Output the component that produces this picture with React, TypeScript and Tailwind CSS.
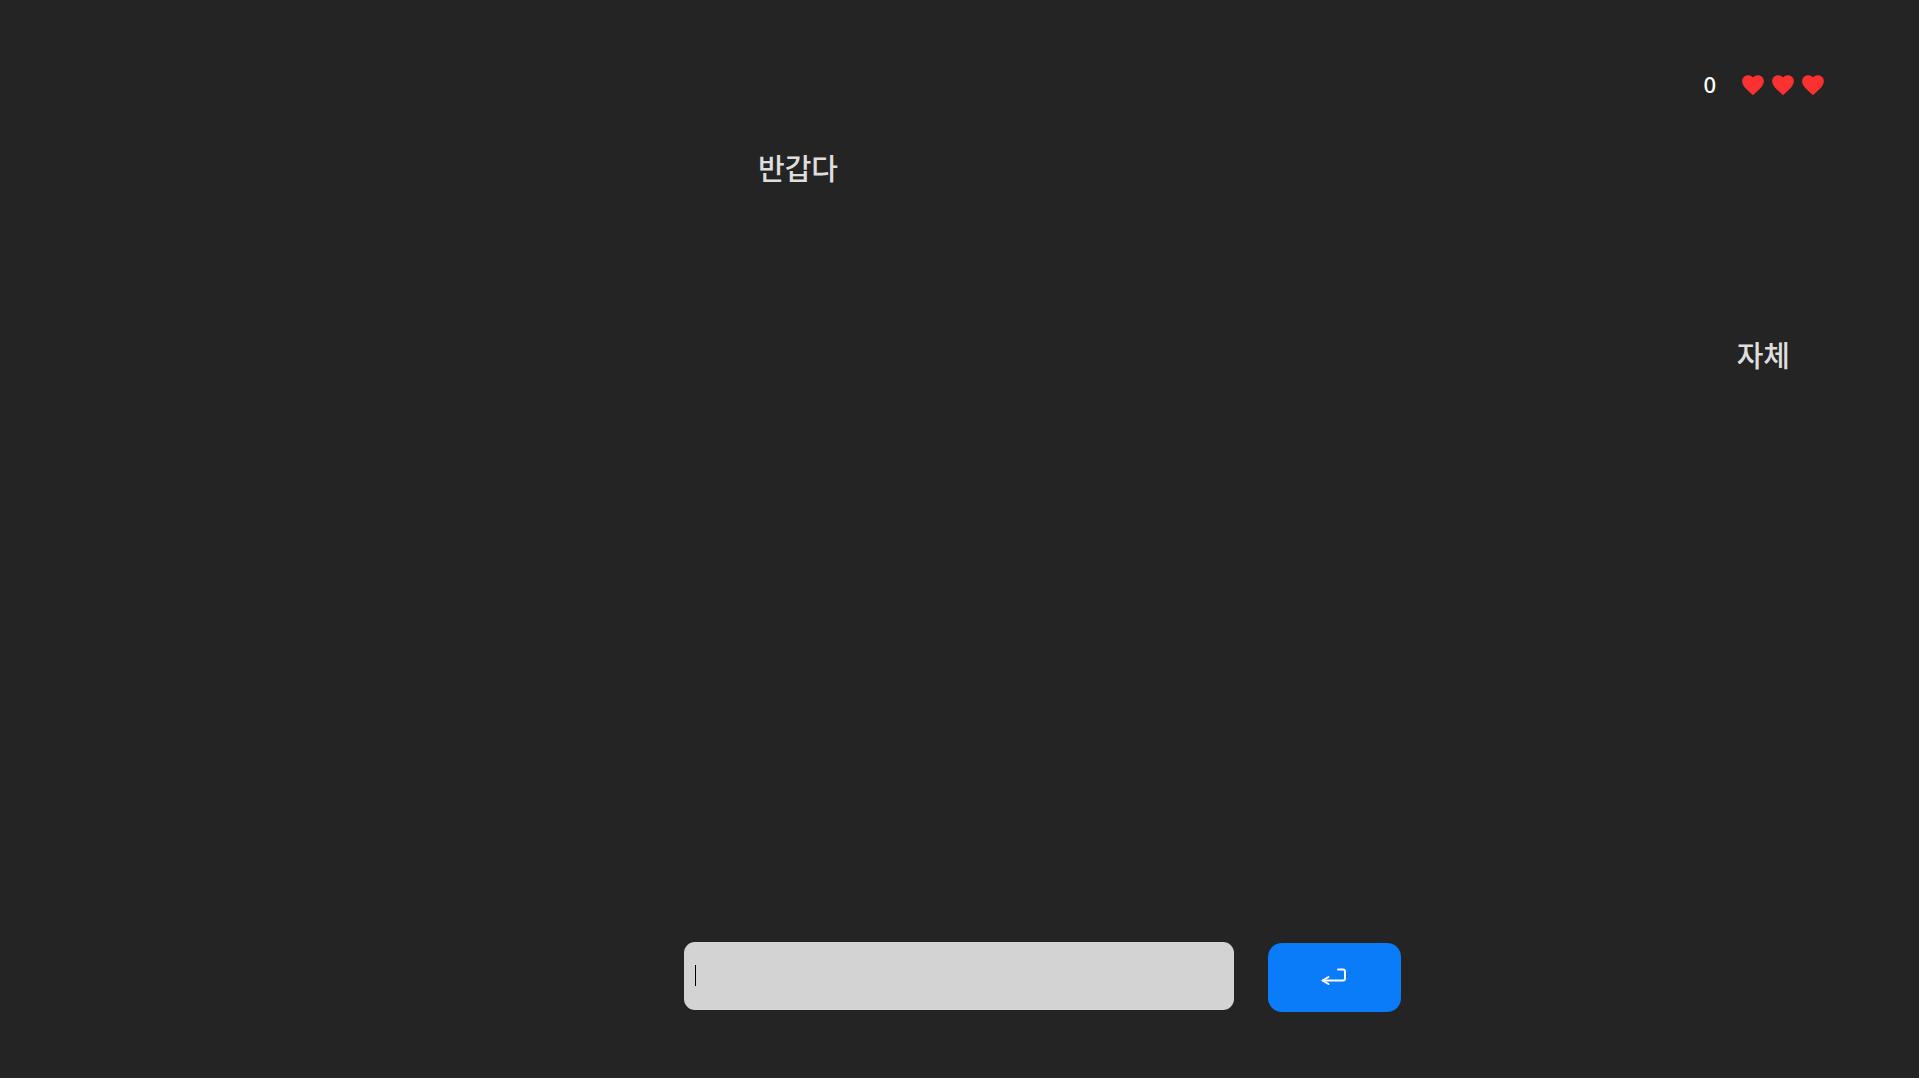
import { useState } from "react";

const words = [
  { text: "반갑다", spot: "left-[39.5%] top-[13.8%]" },
  { text: "자체", spot: "left-[90.5%] top-[31.2%]" },
];

function Heart() {
  return (
    <svg viewBox="0 0 24 24" className="size-[26px]" fill="#fb3030" aria-hidden="true">
      <path d="m12 21.35-1.45-1.32C5.4 15.36 2 12.28 2 8.5 2 5.42 4.42 3 7.5 3c1.74 0 3.41.81 4.5 2.09C13.09 3.81 14.76 3 16.5 3 19.58 3 22 5.42 22 8.5c0 3.78-3.4 6.86-8.55 11.54L12 21.35z" />
    </svg>
  );
}

export default function App() {
  const [value, setValue] = useState("");
  return (
    <main className="relative flex h-screen flex-col justify-between overflow-hidden border-b border-white bg-[#242424] font-['Noto_Sans','Noto_Sans_CJK_KR',sans-serif] text-white">
      <header className="flex items-start justify-end gap-6 pt-[72px] pr-[93px]">
        <span className="text-[22px] leading-6 font-medium">0</span>
        <div className="flex gap-1" role="img" aria-label="3 lives">
          <Heart />
          <Heart />
          <Heart />
        </div>
      </header>

      {words.map((w) => (
        <span
          key={w.text}
          className={`absolute text-[29px] leading-10 font-medium text-[#dedede] ${w.spot}`}
        >
          {w.text}
        </span>
      ))}

      <form
        className="flex items-start justify-center gap-[34px] pb-[66px] pl-[166px]"
        onSubmit={(e) => {
          e.preventDefault();
          setValue("");
        }}
      >
        <div className="relative">
          <input
            autoFocus
            aria-label="Word"
            value={value}
            onChange={(e) => setValue(e.target.value)}
            className="block h-[68px] w-[550px] rounded-[11px] bg-[#d3d3d3] px-[11px] text-lg text-black caret-transparent outline-none"
          />
          {value === "" && (
            <span
              aria-hidden="true"
              className="pointer-events-none absolute top-[23px] left-[11px] h-[21px] w-px bg-black"
            />
          )}
        </div>
        <button
          type="submit"
          aria-label="Enter"
          className="mt-px flex h-[69px] w-[133px] items-center justify-center rounded-[14px] bg-[#0a7cfa]"
        >
          <svg
            viewBox="0 0 28 20"
            className="h-5 w-7"
            fill="none"
            stroke="white"
            strokeWidth="2"
            strokeLinecap="round"
            strokeLinejoin="round"
            aria-hidden="true"
          >
            <path d="M17 1.500h5Q24 1.500 24 3.500V10.500Q24 12.500 22 12.500H2" />
            <path d="M7.500 9 1.500 12.500 7.500 16" />
          </svg>
        </button>
      </form>
    </main>
  );
}
